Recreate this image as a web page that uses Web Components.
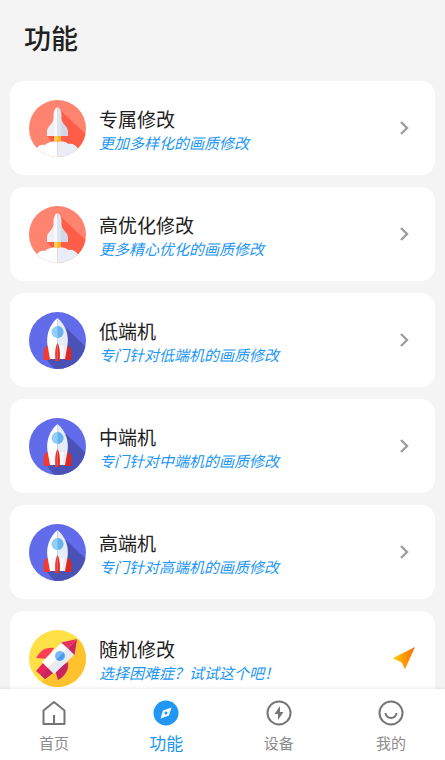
<!DOCTYPE html>
<html lang="zh-CN">
<head>
<meta charset="UTF-8">
<meta name="viewport" content="width=device-width, initial-scale=1">
<title>功能</title>
<style>
    body {
        margin: 0;
        font-family: "Noto Sans CJK SC", sans-serif;
        background: #f4f4f4;
        color: #212121;
    }
</style>
</head>
<body>
<app-shell>
    <h1 slot="title">功能</h1>
    <feature-card icon="shuttle" name="专属修改">更加多样化的画质修改</feature-card>
    <feature-card icon="shuttle" name="高优化修改">更多精心优化的画质修改</feature-card>
    <feature-card icon="rocket" name="低端机">专门针对低端机的画质修改</feature-card>
    <feature-card icon="rocket" name="中端机">专门针对中端机的画质修改</feature-card>
    <feature-card icon="rocket" name="高端机">专门针对高端机的画质修改</feature-card>
    <feature-card icon="launch" name="随机修改" action="send">选择困难症？试试这个吧！</feature-card>
    <tab-bar slot="tabs">
        <tab-item icon="home">首页</tab-item>
        <tab-item icon="compass" active>功能</tab-item>
        <tab-item icon="bolt">设备</tab-item>
        <tab-item icon="smile">我的</tab-item>
    </tab-bar>
</app-shell>

<script>
const pictures = {
    shuttle: `
        <svg viewBox="0 0 57 57" aria-hidden="true">
            <defs><clipPath id="round"><circle cx="28.5" cy="28.5" r="28.5"/></clipPath></defs>
            <g clip-path="url(#round)">
                <path fill="#ff8470" d="M0 0h57v57H0z"/>
                <path fill="#ff5d48" d="M31 10l28 26v14H30L18 36z"/>
                <path fill="#fff" d="M0 57v-9h8c2-3 5-4 8-3 3-3 8-4 12.500-4V57z"/>
                <path fill="#e8edf6" d="M28.500 41c5 0 9 1 11 3 4-1 7 1 9 4h9v9H28.500z"/>
                <path fill="#ffd35a" d="M25 34h7v6l-2 2h-4l-1-2z"/>
                <path fill="#ffb22e" d="M28.500 34H32v6l-2 2h-1.500z"/>
                <path fill="#edf0f8" d="M28.500 12L25 18c-1 6-6.500 8-7 13v5h10.500z"/>
                <path fill="#d0d7e5" d="M28.500 12l3.500 6c1 6 6.500 8 7 13v5H28.500z"/>
                <path fill="#f8f9fd" d="M28.500 7c-2.500 1-4 4-4 9l1 20h3z"/>
                <path fill="#dfe4ef" d="M28.500 7c2.500 1 4 4 4 9l-1 20h-3z"/>
            </g>
        </svg>`,
    rocket: `
        <svg viewBox="0 0 57 57" aria-hidden="true">
            <defs><clipPath id="round"><circle cx="28.5" cy="28.5" r="28.5"/></clipPath></defs>
            <g clip-path="url(#round)">
                <path fill="#626bea" d="M0 0h57v57H0z"/>
                <path fill="#4a53b5" d="M37 16l22 21v22H27l-9-11z"/>
                <path fill="#f5392f" d="M20 33c-6 2-6 7-5 15h6l3-7z"/>
                <path fill="#dc2820" d="M37 33c6 2 6 7 5 15h-6l-3-7z"/>
                <path fill="#fff" d="M28.500 6C20 13 17 24 18.500 33L21 47h7.500z"/>
                <path fill="#e5ecf5" d="M28.500 6C37 13 40 24 38.500 33L36 47h-7.500z"/>
                <path fill="#f5f8fc" d="M22 34h13l-1 13H23z"/>
                <path fill="#f5392f" d="M28.500 31c-2 3-3 10-2 18h2z"/>
                <path fill="#d92a25" d="M28.500 31c2 3 3 10 2 18h-2z"/>
                <circle cx="28.5" cy="20" r="6" fill="#90cff8"/>
                <path fill="#69b2ef" d="M28.500 14a6 6 0 0 1 0 12z"/>
            </g>
        </svg>`,
    launch: `
        <svg viewBox="0 0 57 57" aria-hidden="true">
            <defs><clipPath id="round"><circle cx="28.5" cy="28.5" r="28.5"/></clipPath></defs>
            <g clip-path="url(#round)">
                <path fill="#ffe047" d="M0 0h57v57H0z"/>
                <path fill="#ffc22f" d="M57 0v57H8z"/>
                <path fill="#ff4054" d="M25 18c-9-1-14 3-18 10l11 1z"/>
                <path fill="#c92460" d="M39 32c1 8-3 14-10 18l-3-10z"/>
                <path fill="#e8265c" d="M14 33l10 10-8 6-9-8z"/>
                <path fill="#c92460" d="M19 38l5 5-8 6-4-4z"/>
                <path fill="#fff" d="M47 10L33 12 13 32l6 6z"/>
                <path fill="#e8e9f2" d="M47 10l-2 15-20 19-6-6z"/>
                <path fill="#ec3055" d="M48 9l-16 3.500 7 6z"/>
                <path fill="#c92460" d="M48 9l-2.500 16-6.500-6.500z"/>
                <circle cx="31" cy="26" r="5" fill="#75b9f8"/>
                <path fill="#4d9aea" d="M34.500 22.500a5 5 0 0 1-7 7z"/>
            </g>
        </svg>`,
    chevron: `
        <svg viewBox="0 0 24 24" fill="none" stroke="#9e9e9e" stroke-width="2.400" aria-hidden="true">
            <path d="M9 6l6 6-6 6"/>
        </svg>`,
    send: `
        <svg viewBox="0 0 24 24" aria-hidden="true">
            <defs>
                <linearGradient id="warm">
                    <stop offset="0" stop-color="#ffd000"/>
                    <stop offset=".5" stop-color="#ff9a05"/>
                    <stop offset="1" stop-color="#f66a10"/>
                </linearGradient>
            </defs>
            <path fill="url(#warm)" d="M23 1L13.500 22q-1 1-1.500 0-1-5-4-6.500-2.500-1-6-2.500-.8-.8 0-1.500z"/>
        </svg>`,
    home: `
        <svg viewBox="0 0 26 26" fill="none" stroke="currentColor" stroke-width="2" aria-hidden="true">
            <path stroke-linejoin="round" d="M2.500 10.500L13 2l10.500 8.500V24h-21z"/>
            <path d="M13 24v-9"/>
        </svg>`,
    compass: `
        <svg viewBox="0 0 26 26" aria-hidden="true">
            <circle cx="13" cy="13" r="12.500" fill="currentColor"/>
            <path fill="#fff" fill-rule="evenodd" d="M18.500 7.500l-2.500 8-8.500 3 2.500-8zM13 11.500a1.500 1.500 0 1 0 0 3 1.500 1.500 0 0 0 0-3z"/>
        </svg>`,
    bolt: `
        <svg viewBox="0 0 26 26" aria-hidden="true">
            <circle cx="13" cy="13" r="11.500" fill="none" stroke="currentColor" stroke-width="2"/>
            <path fill="currentColor" d="M14 6l-5.500 8H12v6l5.500-8H14z"/>
        </svg>`,
    smile: `
        <svg viewBox="0 0 26 26" fill="none" stroke="currentColor" stroke-width="2" aria-hidden="true">
            <circle cx="13" cy="13" r="11.500"/>
            <path d="M7.500 13a5.500 5 0 0 0 11 0"/>
        </svg>`
};

class AppShell extends HTMLElement {
    constructor() {
        super();
        this.attachShadow({ mode: 'open' });
        this.shadowRoot.innerHTML = `
            <style>
                :host {
                    display: flex;
                    flex-direction: column;
                    height: 100vh;
                }
                header {
                    padding: 18px 24px 23px;
                }
                ::slotted(h1) {
                    margin: 0;
                    font-size: 27px;
                    line-height: 40px;
                    font-weight: 500;
                }
                main {
                    flex: 1;
                    min-height: 0;
                    overflow: auto;
                    scrollbar-width: none;
                }
                .list {
                    display: flex;
                    flex-direction: column;
                    gap: 12px;
                    padding: 0 10px 12px;
                }
            </style>
            <main>
                <header><slot name="title"></slot></header>
                <div class="list"><slot></slot></div>
            </main>
            <slot name="tabs"></slot>
        `;
    }
}

class FeatureCard extends HTMLElement {
    constructor() {
        super();
        this.attachShadow({ mode: 'open' });
    }

    connectedCallback() {
        const action = this.getAttribute('action') || 'chevron';
        this.shadowRoot.innerHTML = `
            <style>
                :host {
                    display: block;
                }
                button {
                    display: flex;
                    align-items: center;
                    gap: 13px;
                    width: 100%;
                    padding: 18px 19px;
                    border: 0;
                    border-radius: 14px;
                    background: #fff;
                    color: inherit;
                    font: inherit;
                    text-align: left;
                    cursor: pointer;
                }
                .picture {
                    flex: none;
                    width: 57px;
                    height: 57px;
                }
                .text {
                    flex: 1;
                    display: flex;
                    flex-direction: column;
                    padding: 8px 0 2px;
                }
                .name {
                    font-size: 19px;
                    line-height: 24px;
                }
                .note {
                    font-size: 15px;
                    line-height: 24px;
                    font-style: italic;
                    color: #2196f3;
                }
                .action {
                    flex: none;
                    width: 24px;
                    height: 24px;
                }
                svg {
                    display: block;
                }
            </style>
            <button type="button">
                <span class="picture">${pictures[this.getAttribute('icon')]}</span>
                <span class="text">
                    <span class="name">${this.getAttribute('name')}</span>
                    <span class="note"><slot></slot></span>
                </span>
                <span class="action">${pictures[action]}</span>
            </button>
        `;
    }
}

class TabBar extends HTMLElement {
    constructor() {
        super();
        this.attachShadow({ mode: 'open' });
        this.shadowRoot.innerHTML = `
            <style>
                :host {
                    display: block;
                    position: relative;
                    background: #fff;
                    box-shadow: 0 -1px 3px rgba(0, 0, 0, .08);
                }
                nav {
                    display: flex;
                    justify-content: space-between;
                    padding: 11px 10px 4px;
                }
            </style>
            <nav><slot></slot></nav>
        `;
    }
}

class TabItem extends HTMLElement {
    constructor() {
        super();
        this.attachShadow({ mode: 'open' });
    }

    connectedCallback() {
        this.shadowRoot.innerHTML = `
            <style>
                :host {
                    display: block;
                    width: 88px;
                    color: #757575;
                    font-size: 15px;
                }
                :host([active]) {
                    color: #2196f3;
                    font-size: 17px;
                }
                button {
                    display: flex;
                    flex-direction: column;
                    align-items: center;
                    gap: 4px;
                    width: 100%;
                    padding: 0;
                    border: 0;
                    background: none;
                    color: inherit;
                    font: inherit;
                    line-height: 26px;
                    cursor: pointer;
                }
                svg {
                    display: block;
                    width: 26px;
                    height: 26px;
                }
                .label {
                    color: #8c8c8c;
                }
                :host([active]) .label {
                    color: inherit;
                }
            </style>
            <button type="button">
                ${pictures[this.getAttribute('icon')]}
                <span class="label"><slot></slot></span>
            </button>
        `;
    }
}

customElements.define('app-shell', AppShell);
customElements.define('feature-card', FeatureCard);
customElements.define('tab-bar', TabBar);
customElements.define('tab-item', TabItem);
</script>
</body>
</html>
